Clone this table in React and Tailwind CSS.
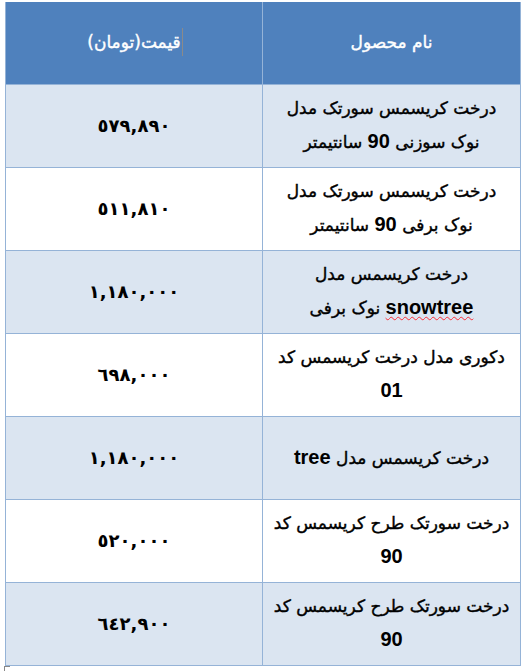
import React from 'react';

const L = 'font-[Liberation_Sans] text-[20px] font-bold [-webkit-text-stroke:0px]';

const rows = [
  { name: <>درخت کریسمس سورتک مدل<br />نوک سوزنی <b className={L}>90</b> سانتیمتر</>, price: '٥٧٩,٨٩٠' },
  { name: <>درخت کریسمس سورتک مدل<br />نوک برفی <b className={L}>90</b> سانتیمتر</>, price: '٥١١,٨١٠' },
  { name: <>درخت کریسمس مدل<br /><b className={L + ' underline decoration-wavy decoration-red-500 decoration-1 underline-offset-2'}>snowtree</b> نوک برفی</>, price: '١,١٨٠,٠٠٠' },
  { name: <>دکوری مدل درخت کریسمس کد<br /><b className={L}>01</b></>, price: '٦٩٨,٠٠٠' },
  { name: <>درخت کریسمس مدل <b className={L}>tree</b></>, price: '١,١٨٠,٠٠٠' },
  { name: <>درخت سورتک طرح کریسمس کد<br /><b className={L}>90</b></>, price: '٥٢٠,٠٠٠' },
  { name: <>درخت سورتک طرح کریسمس کد<br /><b className={L}>90</b></>, price: '٦٤٢,٩٠٠' },
];

export default function App() {
  return (
    <div className="min-h-screen bg-white pt-[2px] pl-[5px] font-['DejaVu_Sans',sans-serif] text-black">
      <table dir="rtl" className="w-[515px] border-collapse table-fixed">
        <thead>
          <tr className="h-[82px] bg-[#4f81bd] text-white text-[17px]">
            <th className="w-[258px] font-normal border-x border-[#95b3d7] [-webkit-text-stroke:0.4px_white]">نام محصول</th>
            <th className="w-[257px] font-normal border-x border-[#95b3d7] [-webkit-text-stroke:0.4px_white]">
              <span className="relative">
                قیمت(تومان)
                <span className="absolute right-[-2px] top-[-4px] h-[28px] w-px bg-[#8a8a8a]" />
              </span>
            </th>
          </tr>
        </thead>
        <tbody>
          {rows.map((r, i) => (
            <tr key={i} className={(i % 2 === 0 ? 'bg-[#dbe5f1]' : 'bg-white') + ' h-[83px]'}>
              <td className="border border-[#95b3d7] text-center text-[17px] leading-[33px] whitespace-nowrap px-1 [-webkit-text-stroke:0.4px_black]">{r.name}</td>
              <td className="border border-[#95b3d7] text-center">
                <span dir="ltr" className="font-bold text-[18px]">{r.price}</span>
              </td>
            </tr>
          ))}
        </tbody>
      </table>
      <div className="ml-[-1px] h-[7px] w-[6px] border-l border-t border-[#888]" />
    </div>
  );
}
